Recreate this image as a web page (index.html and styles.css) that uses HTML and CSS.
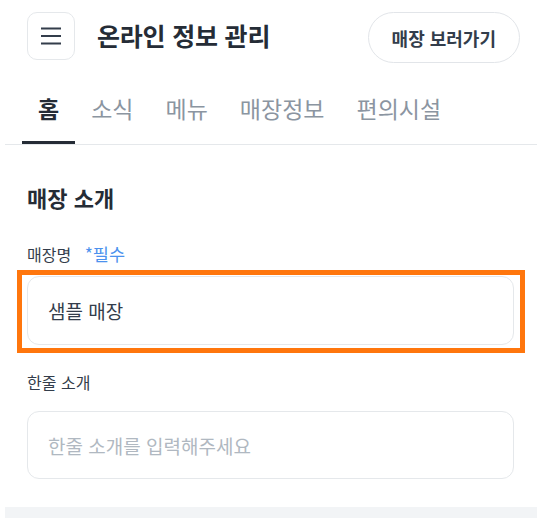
FILE: index.html
```html
<!DOCTYPE html>
<html lang="ko">
<head>
<meta charset="utf-8">
<title>온라인 정보 관리</title>
<link rel="stylesheet" href="styles.css">
</head>
<body>
<div class="page">
  <header class="topbar">
    <div class="topbar-left">
      <button class="menu-btn" type="button" aria-label="메뉴">
        <svg width="22" height="18" viewBox="0 0 22 18">
          <path d="M1 1.5H21M1 9H21M1 16.5H21" stroke="#333d4b" stroke-width="1.8" fill="none"/>
        </svg>
      </button>
      <h1 class="title">온라인 정보 관리</h1>
    </div>
    <button class="store-btn" type="button">매장 보러가기</button>
  </header>

  <nav class="tabs">
    <a class="tab active">홈</a>
    <a class="tab">소식</a>
    <a class="tab">메뉴</a>
    <a class="tab">매장정보</a>
    <a class="tab">편의시설</a>
  </nav>

  <section class="section">
    <h2 class="section-title">매장 소개</h2>

    <div class="field">
      <div class="label">매장명 <span class="required">*필수</span></div>
      <div class="highlight">
        <div class="input">샘플 매장</div>
      </div>
    </div>

    <div class="field field-2">
      <div class="label">한줄 소개</div>
      <div class="input input-2 placeholder">한줄 소개를 입력해주세요</div>
    </div>
  </section>

  <div class="divider"></div>
</div>
</body>
</html>
```

FILE: styles.css
```css
* { box-sizing: border-box; }

html, body {
  margin: 0;
  padding: 0;
  background: #ffffff;
}

body {
  font-family: "Noto Sans CJK KR", "Noto Sans", sans-serif;
  color: #333d4b;
}

.page {
  margin-left: 5px;
  width: 532px;
}

.topbar {
  display: flex;
  align-items: flex-start;
  justify-content: space-between;
  padding: 12px 17px 0 22px;
}

.topbar-left {
  display: flex;
  align-items: center;
  gap: 22px;
  height: 48px;
}

.menu-btn {
  width: 48px;
  height: 48px;
  border: 1px solid #e5e8eb;
  border-radius: 10px;
  background: #fff;
  display: flex;
  align-items: center;
  justify-content: center;
  padding: 0;
}

.title {
  margin: -3px 0 0;
  font-size: 25px;
  font-weight: 700;
  line-height: 32px;
  color: #252c36;
  letter-spacing: -0.2px;
}

.store-btn {
  height: 51px;
  padding: 0 23px;
  border: 1px solid #e2e5e9;
  border-radius: 26px;
  background: #fff;
  font-family: inherit;
  font-size: 18px;
  font-weight: 700;
  color: #333d4b;
}

.tabs {
  display: flex;
  margin-top: 17px;
  padding-left: 17px;
  border-bottom: 1px solid #e5e8eb;
}

.tab {
  padding: 12px 16px 17px;
  font-size: 23px;
  line-height: 32px;
  color: #8b95a1;
  border-bottom: 3px solid transparent;
}

.tab.active {
  color: #252c36;
  font-weight: 700;
  border-bottom-color: #252c36;
}

.section {
  padding: 38px 23px 0 22px;
}

.section-title {
  margin: 0;
  font-size: 22px;
  font-weight: 700;
  line-height: 28px;
  color: #252c36;
}

.field {
  margin-top: 32px;
}

.label {
  font-size: 16px;
  line-height: 22px;
  color: #333d4b;
}

.required {
  margin-left: 9px;
  font-size: 17.5px;
  color: #4c92ee;
}

.highlight {
  margin: 5px -11px 0 -10px;
  border: 5px solid #ff760d;
  padding: 1px 6px 3px 5px;
}

.input {
  height: 69px;
  border: 1px solid #e5e8eb;
  border-radius: 12px;
  padding: 0 20px;
  display: flex;
  align-items: center;
  font-size: 19px;
  color: #333d4b;
  background: #fff;
}

.field-2 {
  margin-top: 18px;
}

.input-2 {
  margin-top: 18px;
  height: 68px;
}

.placeholder {
  color: #b0b8c1;
}

.divider {
  margin-top: 28px;
  height: 11px;
  background: #f2f4f6;
}
```
